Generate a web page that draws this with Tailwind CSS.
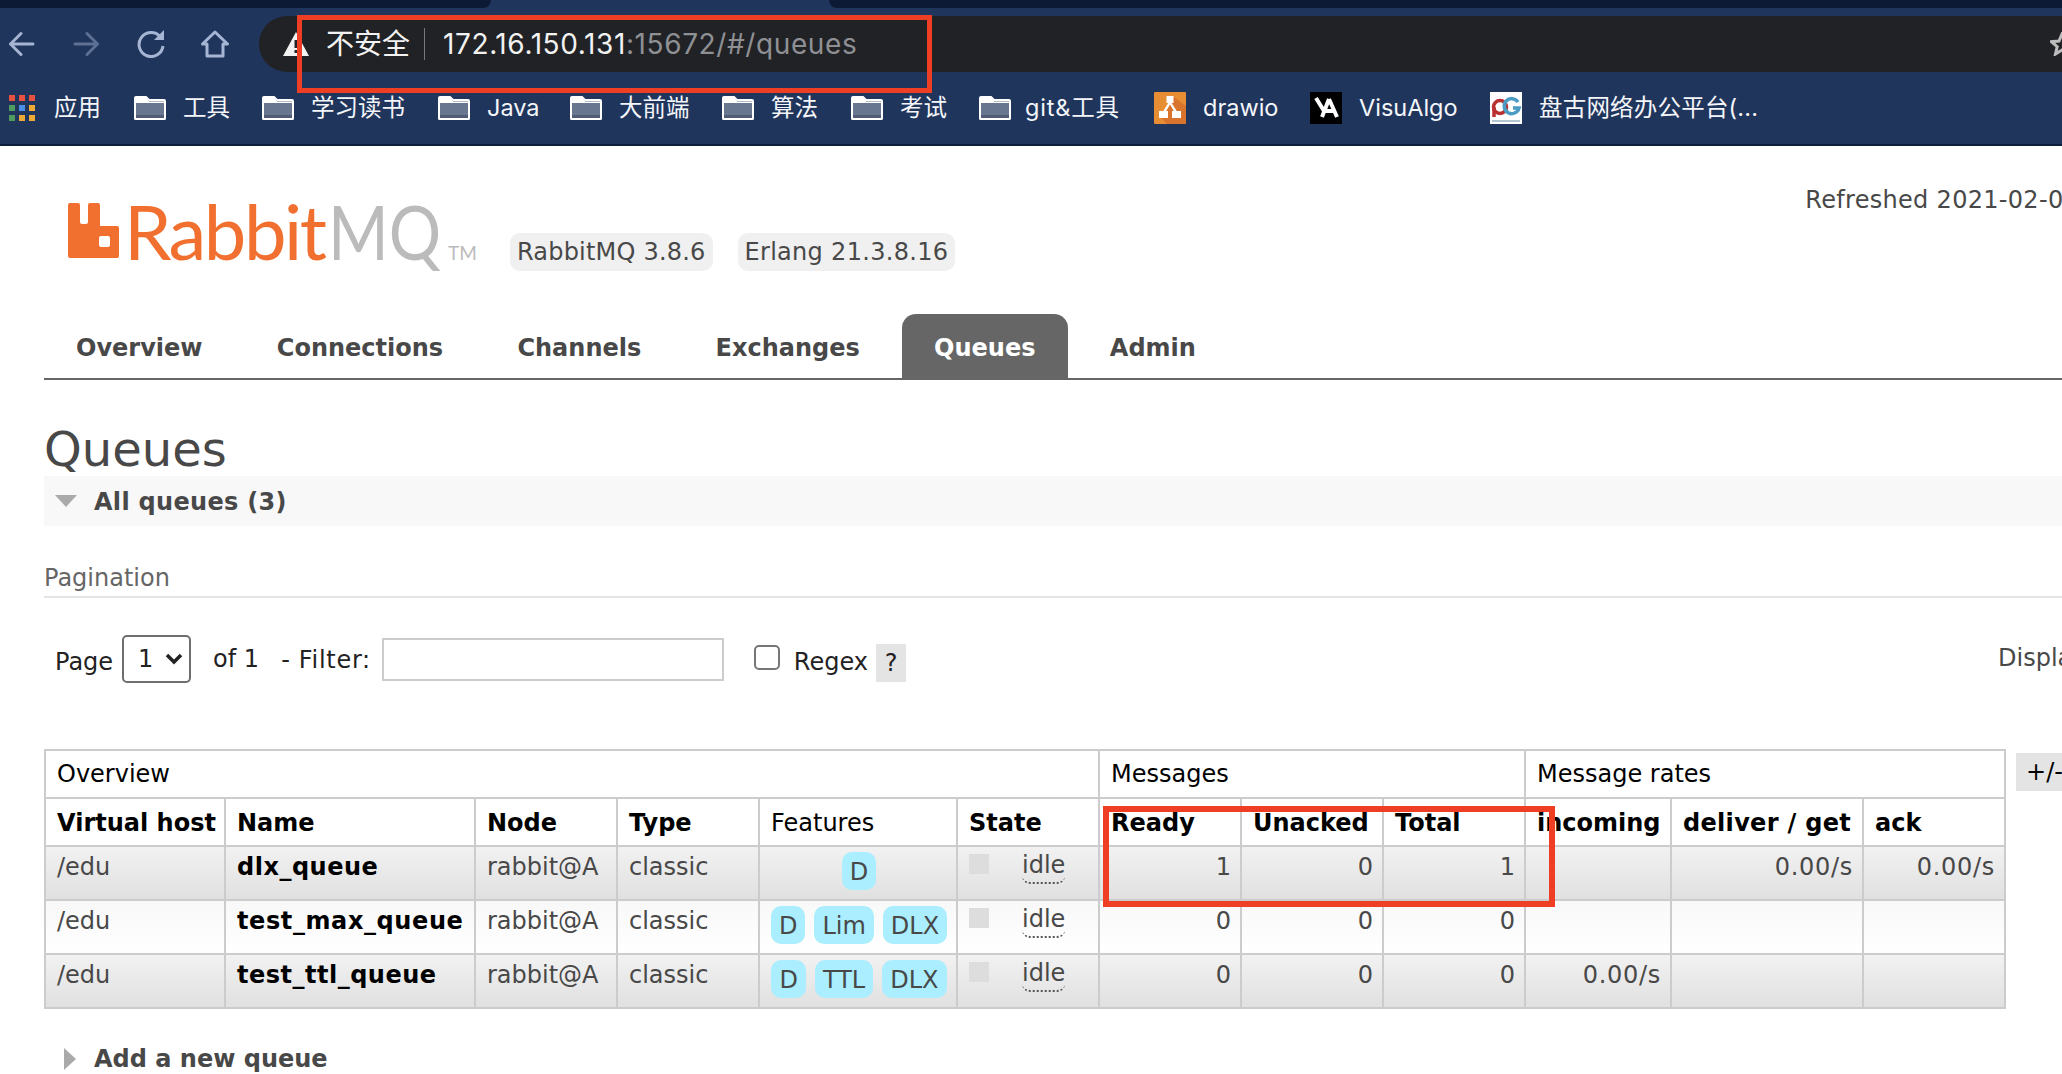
<!DOCTYPE html>
<html lang="en">
<head>
  <meta charset="UTF-8" />
  <title>RabbitMQ Management</title>
  <script src="https://cdn.jsdelivr.net/npm/@tailwindcss/browser@4"></script>
</head>
<body class="bg-white">
<div class="relative w-[2062px] h-[1074px] overflow-hidden font-['DejaVu_Sans',sans-serif] text-[24px] text-[#484848]">

  <!-- browser chrome -->
  <div class="h-[146px] bg-[#20355c] border-b-2 border-[#0f1e3a] font-['Inter','Noto_Sans_CJK_SC',sans-serif] text-white">
    <div class="flex h-[8px]">
      <div class="w-[491px] bg-[#0c1a36] rounded-br-lg"></div>
      <div class="w-[338px]"></div>
      <div class="flex-1 bg-[#0c1a36] rounded-bl-lg"></div>
    </div>
    <div class="flex items-center h-[56px] mt-[8px]">
      <svg class="ml-[9px] w-[26px] h-[26px]" viewBox="0 0 26 26" fill="none" stroke="#a5b5d3" stroke-width="3" stroke-linecap="round" stroke-linejoin="round"><path d="M24 13H2M12 2.5 1.5 13 12 23.5"/></svg>
      <svg class="ml-[38px] w-[26px] h-[26px]" viewBox="0 0 26 26" fill="none" stroke="#5d6f92" stroke-width="3" stroke-linecap="round" stroke-linejoin="round"><path d="M2 13h22M14 2.5 24.500 13 14 23.500"/></svg>
      <svg class="ml-[38px] w-[28px] h-[28px]" viewBox="0 0 28 28" fill="none" stroke="#a5b5d3" stroke-width="3"><path d="M23 6.500A12 12 0 1 0 26 16"/><path d="M17 10h10V0z" fill="#a5b5d3" stroke="none"/></svg>
      <svg class="ml-[36px] w-[28px] h-[28px]" viewBox="0 0 28 28" fill="none" stroke="#a5b5d3" stroke-width="3" stroke-linejoin="round"><path d="M1.500 14 14 2l12.500 12H22v12H6V14z"/></svg>
      <div class="flex items-center flex-1 h-[56px] ml-[30px] bg-[#212226] rounded-l-[28px]">
        <svg class="ml-[24px] w-[26px] h-[24px]" viewBox="0 0 26 24"><path d="M13 0 26 24H0z" fill="#f2f2f2"/><path d="M11.500 8h3v8h-3zM11.500 18h3v3h-3z" fill="#212226"/></svg>
        <span class="ml-[17px] text-[28px] leading-none text-[#f2f2f2]">不安全</span>
        <div class="ml-[14px] w-px h-[32px] bg-[#77797e]"></div>
        <div class="ml-[18px] text-[28px] tracking-[0.6px] leading-none whitespace-nowrap text-[#f2f2f2]">172.16.150.131<span class="text-[#8f9094]">:15672/#/queues</span></div>
        <svg class="ml-auto mr-[-12px] w-[24px] h-[24px]" viewBox="0 0 24 24" fill="none" stroke="#bdbdbd" stroke-width="3"><path d="m12 2 3 7 7.500.7-5.700 5 1.700 7.300L12 18l-6.500 4 1.700-7.300-5.700-5L9 9z"/></svg>
      </div>
    </div>
    <div class="flex items-center h-[72px] text-[23.500px] whitespace-nowrap text-[#f4f6fa]">
      <div class="flex items-center w-[134px] pl-[9px] gap-[19px]">
        <div class="grid grid-cols-3 gap-[4px] w-[26px]">
          <i class="h-[6px] bg-[#e8503f]"></i><i class="h-[6px] bg-[#e8503f]"></i><i class="h-[6px] bg-[#e8503f]"></i>
          <i class="h-[6px] bg-[#4f9a5f]"></i><i class="h-[6px] bg-[#4a8ee8]"></i><i class="h-[6px] bg-[#eeaa35]"></i>
          <i class="h-[6px] bg-[#4f9a5f]"></i><i class="h-[6px] bg-[#eeaa35]"></i><i class="h-[6px] bg-[#eeaa35]"></i>
        </div>
        <span>应用</span>
      </div>
      <div class="flex items-center w-[128px] gap-[17px]"><svg class="w-[32px] h-[24px]" viewBox="0 0 32 24"><path d="M1 22.500V2a1 1 0 0 1 1-1h10l3 3h15a1 1 0 0 1 1 1v17.500a.5.5 0 0 1-.5.5H1.500a.5.5 0 0 1-.5-.5z" fill="#69768f" stroke="#fff" stroke-width="2"/><path d="M2 1.500h10l3 4h16v1.500H2z" fill="#fff"/><path d="M2 19h28v3H2z" fill="#515d76"/></svg><span>工具</span></div>
      <div class="flex items-center w-[176px] gap-[17px]"><svg class="w-[32px] h-[24px]" viewBox="0 0 32 24"><path d="M1 22.500V2a1 1 0 0 1 1-1h10l3 3h15a1 1 0 0 1 1 1v17.500a.5.5 0 0 1-.5.5H1.500a.5.5 0 0 1-.5-.5z" fill="#69768f" stroke="#fff" stroke-width="2"/><path d="M2 1.500h10l3 4h16v1.500H2z" fill="#fff"/><path d="M2 19h28v3H2z" fill="#515d76"/></svg><span>学习读书</span></div>
      <div class="flex items-center w-[132px] gap-[17px]"><svg class="w-[32px] h-[24px]" viewBox="0 0 32 24"><path d="M1 22.500V2a1 1 0 0 1 1-1h10l3 3h15a1 1 0 0 1 1 1v17.500a.5.5 0 0 1-.5.5H1.500a.5.5 0 0 1-.5-.5z" fill="#69768f" stroke="#fff" stroke-width="2"/><path d="M2 1.500h10l3 4h16v1.500H2z" fill="#fff"/><path d="M2 19h28v3H2z" fill="#515d76"/></svg><span>Java</span></div>
      <div class="flex items-center w-[152px] gap-[17px]"><svg class="w-[32px] h-[24px]" viewBox="0 0 32 24"><path d="M1 22.500V2a1 1 0 0 1 1-1h10l3 3h15a1 1 0 0 1 1 1v17.500a.5.5 0 0 1-.5.5H1.500a.5.5 0 0 1-.5-.5z" fill="#69768f" stroke="#fff" stroke-width="2"/><path d="M2 1.500h10l3 4h16v1.500H2z" fill="#fff"/><path d="M2 19h28v3H2z" fill="#515d76"/></svg><span>大前端</span></div>
      <div class="flex items-center w-[129px] gap-[17px]"><svg class="w-[32px] h-[24px]" viewBox="0 0 32 24"><path d="M1 22.500V2a1 1 0 0 1 1-1h10l3 3h15a1 1 0 0 1 1 1v17.500a.5.5 0 0 1-.5.5H1.500a.5.5 0 0 1-.5-.5z" fill="#69768f" stroke="#fff" stroke-width="2"/><path d="M2 1.500h10l3 4h16v1.500H2z" fill="#fff"/><path d="M2 19h28v3H2z" fill="#515d76"/></svg><span>算法</span></div>
      <div class="flex items-center w-[128px] gap-[17px]"><svg class="w-[32px] h-[24px]" viewBox="0 0 32 24"><path d="M1 22.500V2a1 1 0 0 1 1-1h10l3 3h15a1 1 0 0 1 1 1v17.500a.5.5 0 0 1-.5.5H1.500a.5.5 0 0 1-.5-.5z" fill="#69768f" stroke="#fff" stroke-width="2"/><path d="M2 1.500h10l3 4h16v1.500H2z" fill="#fff"/><path d="M2 19h28v3H2z" fill="#515d76"/></svg><span>考试</span></div>
      <div class="flex items-center w-[175px] gap-[14px]"><svg class="w-[32px] h-[24px]" viewBox="0 0 32 24"><path d="M1 22.500V2a1 1 0 0 1 1-1h10l3 3h15a1 1 0 0 1 1 1v17.500a.5.5 0 0 1-.5.5H1.500a.5.5 0 0 1-.5-.5z" fill="#69768f" stroke="#fff" stroke-width="2"/><path d="M2 1.500h10l3 4h16v1.500H2z" fill="#fff"/><path d="M2 19h28v3H2z" fill="#515d76"/></svg><span class="tracking-[0.8px]">git&amp;工具</span></div>
      <div class="flex items-center w-[156px] gap-[17px]">
        <svg class="w-[32px] h-[32px]" viewBox="0 0 32 32"><rect width="32" height="32" rx="1" fill="#e78d34"/><path d="M32 32V14L20 5 7 26l6 6z" fill="#d9742e"/><path d="M12.500 4h7v7h-1.800l5 8H27v7H18v-7h1.800l-3.800-6.500L12.200 19H14v7H5v-7h4.300l5-8h-1.800z" fill="#fff"/></svg>
        <span>drawio</span>
      </div>
      <div class="flex items-center w-[180px] gap-[17px]">
        <svg class="w-[32px] h-[32px]" viewBox="0 0 32 32"><rect width="32" height="32" fill="#000"/><path d="M6 6l8 13M19 7l-7 18M19 7l8 18M15 19h9" fill="none" stroke="#fff" stroke-width="4"/></svg>
        <span>VisuAlgo</span>
      </div>
      <div class="flex items-center gap-[17px]">
        <svg class="w-[32px] h-[32px]" viewBox="0 0 32 32"><rect width="32" height="32" fill="#fff"/><circle cx="10" cy="15" r="6.500" fill="none" stroke="#b8302f" stroke-width="3.500"/><path d="M4 15v10" stroke="#b8302f" stroke-width="3.500"/><path d="M28 10a7.500 7.500 0 1 0 1 6h-6" fill="none" stroke="#4a9cc4" stroke-width="3.500"/><path d="M2 29h28" stroke="#b5c6d3" stroke-width="2"/></svg>
        <span class="tracking-[0.2px]">盘古网络办公平台(...</span>
      </div>
    </div>
  </div>

  <main class="pl-[44px]">
    <!-- header -->
    <div class="flex h-[167px] whitespace-nowrap">
      <div class="flex shrink-0 w-[466px] pl-[24px] pt-[57px]">
        <svg class="shrink-0 w-[52px] h-[55px]" viewBox="0 0 52 55"><path fill-rule="evenodd" d="M2 0h8a2 2 0 0 1 2 2v17a2 2 0 0 0 2 2h4a2 2 0 0 0 2-2V2a2 2 0 0 1 2-2h8a2 2 0 0 1 2 2v21h17a2 2 0 0 1 2 2v28a2 2 0 0 1-2 2H2a2 2 0 0 1-2-2V2a2 2 0 0 1 2-2zM33 33a2 2 0 0 0-2 2v7a2 2 0 0 0 2 2h7a2 2 0 0 0 2-2v-7a2 2 0 0 0-2-2z" fill="#f1702f"/></svg>
        <div class="flex items-baseline h-[55px] ml-[4px] font-['Lato',sans-serif] font-normal text-[76px] leading-[55px]">
          <span class="w-[204px] tracking-[-2.500px] text-[#f1702f]">Rabbit</span>
          <span class="inline-block w-[120px] origin-left scale-x-[0.86] text-[#bbbbbb]">MQ</span>
          <span class="text-[19px] text-[#bbbbbb]">TM</span>
        </div>
      </div>
      <div class="flex shrink-0 items-center h-[38px] mt-[87px] px-[7px] tracking-[0.2px] rounded-[10px] bg-[#f0f0f0]">RabbitMQ 3.8.6</div>
      <div class="flex shrink-0 items-center h-[38px] mt-[87px] ml-[25px] px-[7px] tracking-[0.3px] rounded-[10px] bg-[#f0f0f0]">Erlang 21.3.8.16</div>
      <div class="shrink-0 ml-[850px] mt-[36px] tracking-[0.3px]">Refreshed 2021-02-0</div>
    </div>

    <!-- nav -->
    <nav class="flex gap-[10.300px] h-[67px] border-b-2 border-[#666666] font-bold">
      <a class="flex items-center px-[32px] pt-[5px]">Overview</a>
      <a class="flex items-center px-[32px] pt-[5px]">Connections</a>
      <a class="flex items-center px-[32px] pt-[5px]">Channels</a>
      <a class="flex items-center px-[32px] pt-[5px]">Exchanges</a>
      <a class="flex items-center mt-[1px] px-[32px] pt-[3px] bg-[#666666] text-white rounded-t-[14px]">Queues</a>
      <a class="flex items-center px-[32px] pt-[5px]">Admin</a>
    </nav>

    <h1 class="h-[96px] pt-[41px] text-[48px] leading-[56px]">Queues</h1>

    <div class="flex items-center h-[50px] bg-[#f8f8f8] font-bold">
      <div class="ml-[11px] w-0 h-0 border-x-[11px] border-x-transparent border-t-[12px] border-t-[#aaaaaa]"></div>
      <span class="ml-[17px] pt-[2px] tracking-[0.3px]">All queues (3)</span>
    </div>

    <div class="flex items-end h-[72px] border-b-2 border-[#e4e4e4] text-[#666666]">
      <span>Pagination</span>
    </div>

    <!-- pagination controls -->
    <div class="flex items-center h-[151px] pb-[29px] whitespace-nowrap text-[#222222]">
      <span class="shrink-0 ml-[11px] mt-[6px]">Page</span>
      <div class="flex shrink-0 items-center w-[69px] h-[48px] ml-[9px] pl-[14px] border-2 border-[#6e6e6e] rounded-[5px]">
        <span>1</span>
        <svg class="ml-[12px] w-[18px] h-[12px]" viewBox="0 0 18 12" fill="none" stroke="#222" stroke-width="3.500"><path d="m2 2 7 7 7-7"/></svg>
      </div>
      <span class="shrink-0 ml-[22px]">of 1</span>
      <span class="shrink-0 ml-[22px] mt-[2px] tracking-[0.7px]">- Filter:</span>
      <input type="text" class="shrink-0 w-[342px] h-[43px] ml-[11px] border-2 border-[#cccccc] bg-white" />
      <input type="checkbox" class="shrink-0 appearance-none w-[26px] h-[25px] ml-[30px] mt-[-4px] border-2 border-[#767676] rounded-[5px] bg-white" />
      <span class="shrink-0 ml-[14px] mt-[6px]">Regex</span>
      <span class="flex shrink-0 items-center justify-center w-[30px] h-[38px] ml-[8px] mt-[7px] bg-[#e4e4e4]">?</span>
      <span class="shrink-0 ml-[1092px] mt-[-2px] text-[#484848]">Display</span>
    </div>

    <!-- queue table -->
    <div class="flex items-start">
      <table class="shrink-0 table-fixed border-collapse border-2 border-[#cccccc] w-[1960px]">
        <colgroup>
          <col class="w-[180px]" /><col class="w-[250px]" /><col class="w-[142px]" /><col class="w-[142px]" /><col class="w-[198px]" /><col class="w-[142px]" />
          <col class="w-[142px]" /><col class="w-[142px]" /><col class="w-[142px]" /><col class="w-[146px]" /><col class="w-[192px]" /><col class="w-[142px]" />
        </colgroup>
        <thead class="text-black">
          <tr class="h-[48px]">
            <th colspan="6" class="border-2 border-[#cccccc] pl-[11px] pr-[9px] font-normal text-left">Overview</th>
            <th colspan="3" class="border-2 border-[#cccccc] pl-[11px] pr-[9px] font-normal text-left">Messages</th>
            <th colspan="3" class="border-2 border-[#cccccc] pl-[11px] pr-[9px] font-normal text-left">Message rates</th>
          </tr>
          <tr class="h-[48px]">
            <th class="border-2 border-[#cccccc] pl-[11px] pr-[9px] pt-[2px] font-bold text-left whitespace-nowrap">Virtual host</th>
            <th class="border-2 border-[#cccccc] pl-[11px] pr-[9px] pt-[2px] font-bold text-left">Name</th>
            <th class="border-2 border-[#cccccc] pl-[11px] pr-[9px] pt-[2px] font-bold text-left">Node</th>
            <th class="border-2 border-[#cccccc] pl-[11px] pr-[9px] pt-[2px] font-bold text-left">Type</th>
            <th class="border-2 border-[#cccccc] pl-[11px] pr-[9px] pt-[2px] font-normal text-left">Features</th>
            <th class="border-2 border-[#cccccc] pl-[11px] pr-[9px] pt-[2px] font-bold text-left">State</th>
            <th class="border-2 border-[#cccccc] pl-[11px] pr-[9px] pt-[2px] font-bold text-left">Ready</th>
            <th class="border-2 border-[#cccccc] pl-[11px] pr-[9px] pt-[2px] font-bold text-left">Unacked</th>
            <th class="border-2 border-[#cccccc] pl-[11px] pr-[9px] pt-[2px] font-bold text-left">Total</th>
            <th class="border-2 border-[#cccccc] pl-[11px] pr-[9px] pt-[2px] font-bold text-left">incoming</th>
            <th class="border-2 border-[#cccccc] pl-[11px] pr-[9px] pt-[2px] font-bold text-left tracking-[0.3px] whitespace-nowrap">deliver / get</th>
            <th class="border-2 border-[#cccccc] pl-[11px] pr-[9px] pt-[2px] font-bold text-left">ack</th>
          </tr>
        </thead>
        <tbody>
          <tr class="h-[54px] bg-linear-to-b from-[#f2f2f2] to-[#e0e0e0]">
            <td class="border-2 border-[#cccccc] pl-[11px] pr-[9px] pb-[13px] leading-[30px]">/edu</td>
            <td class="border-2 border-[#cccccc] pl-[11px] pr-[9px] pb-[13px] leading-[30px] font-bold tracking-[0.5px] text-black">dlx_queue</td>
            <td class="border-2 border-[#cccccc] pl-[11px] pr-[9px] pb-[13px] leading-[30px]">rabbit@A</td>
            <td class="border-2 border-[#cccccc] pl-[11px] pr-[9px] pb-[13px] leading-[30px]">classic</td>
            <td class="border-2 border-[#cccccc] pl-[2px] pb-[5px]">
              <div class="flex justify-center gap-[9px]"><span class="flex items-center h-[38px] px-[8px] pt-[2px] rounded-[10px] bg-[#aaeeff]">D</span></div>
            </td>
            <td class="border-2 border-[#cccccc] pl-[11px] pr-[9px] pb-[13px] leading-[30px]">
              <div class="flex items-start"><i class="w-[20px] h-[20px] mt-[5px] bg-[#dddddd]"></i><span class="ml-[33px] h-[35px] pt-[1px] border-b-2 border-dotted border-[#555555] rounded-b-[8px]">idle</span></div>
            </td>
            <td class="border-2 border-[#cccccc] pl-[11px] pr-[9px] pb-[13px] leading-[30px] text-right">1</td>
            <td class="border-2 border-[#cccccc] pl-[11px] pr-[9px] pb-[13px] leading-[30px] text-right">0</td>
            <td class="border-2 border-[#cccccc] pl-[11px] pr-[9px] pb-[13px] leading-[30px] text-right">1</td>
            <td class="border-2 border-[#cccccc] pl-[11px] pr-[9px] pb-[13px] leading-[30px] text-right"></td>
            <td class="border-2 border-[#cccccc] pl-[11px] pr-[9px] pb-[13px] leading-[30px] tracking-[0.7px] text-right">0.00/s</td>
            <td class="border-2 border-[#cccccc] pl-[11px] pr-[9px] pb-[13px] leading-[30px] tracking-[0.7px] text-right">0.00/s</td>
          </tr>
          <tr class="h-[54px] bg-linear-to-b from-[#f8f8f8] to-white">
            <td class="border-2 border-[#cccccc] pl-[11px] pr-[9px] pb-[13px] leading-[30px]">/edu</td>
            <td class="border-2 border-[#cccccc] pl-[11px] pr-[9px] pb-[13px] leading-[30px] font-bold tracking-[0.6px] text-black whitespace-nowrap">test_max_queue</td>
            <td class="border-2 border-[#cccccc] pl-[11px] pr-[9px] pb-[13px] leading-[30px]">rabbit@A</td>
            <td class="border-2 border-[#cccccc] pl-[11px] pr-[9px] pb-[13px] leading-[30px]">classic</td>
            <td class="border-2 border-[#cccccc] pl-[2px] pb-[5px]">
              <div class="flex justify-center gap-[9px]"><span class="flex items-center h-[38px] px-[8px] pt-[2px] rounded-[10px] bg-[#aaeeff]">D</span><span class="flex items-center h-[38px] px-[8px] pt-[2px] rounded-[10px] bg-[#aaeeff]">Lim</span><span class="flex items-center h-[38px] px-[8px] pt-[2px] rounded-[10px] bg-[#aaeeff]">DLX</span></div>
            </td>
            <td class="border-2 border-[#cccccc] pl-[11px] pr-[9px] pb-[13px] leading-[30px]">
              <div class="flex items-start"><i class="w-[20px] h-[20px] mt-[5px] bg-[#dddddd]"></i><span class="ml-[33px] h-[35px] pt-[1px] border-b-2 border-dotted border-[#555555] rounded-b-[8px]">idle</span></div>
            </td>
            <td class="border-2 border-[#cccccc] pl-[11px] pr-[9px] pb-[13px] leading-[30px] text-right">0</td>
            <td class="border-2 border-[#cccccc] pl-[11px] pr-[9px] pb-[13px] leading-[30px] text-right">0</td>
            <td class="border-2 border-[#cccccc] pl-[11px] pr-[9px] pb-[13px] leading-[30px] text-right">0</td>
            <td class="border-2 border-[#cccccc] pl-[11px] pr-[9px] pb-[13px] leading-[30px] text-right"></td>
            <td class="border-2 border-[#cccccc] pl-[11px] pr-[9px] pb-[13px] leading-[30px] text-right"></td>
            <td class="border-2 border-[#cccccc] pl-[11px] pr-[9px] pb-[13px] leading-[30px] text-right"></td>
          </tr>
          <tr class="h-[54px] bg-linear-to-b from-[#f2f2f2] to-[#e0e0e0]">
            <td class="border-2 border-[#cccccc] pl-[11px] pr-[9px] pb-[13px] leading-[30px]">/edu</td>
            <td class="border-2 border-[#cccccc] pl-[11px] pr-[9px] pb-[13px] leading-[30px] font-bold tracking-[0.5px] text-black">test_ttl_queue</td>
            <td class="border-2 border-[#cccccc] pl-[11px] pr-[9px] pb-[13px] leading-[30px]">rabbit@A</td>
            <td class="border-2 border-[#cccccc] pl-[11px] pr-[9px] pb-[13px] leading-[30px]">classic</td>
            <td class="border-2 border-[#cccccc] pl-[2px] pb-[5px]">
              <div class="flex justify-center gap-[9px]"><span class="flex items-center h-[38px] px-[8px] pt-[2px] rounded-[10px] bg-[#aaeeff]">D</span><span class="flex items-center h-[38px] px-[8px] pt-[2px] rounded-[10px] bg-[#aaeeff]">TTL</span><span class="flex items-center h-[38px] px-[8px] pt-[2px] rounded-[10px] bg-[#aaeeff]">DLX</span></div>
            </td>
            <td class="border-2 border-[#cccccc] pl-[11px] pr-[9px] pb-[13px] leading-[30px]">
              <div class="flex items-start"><i class="w-[20px] h-[20px] mt-[5px] bg-[#dddddd]"></i><span class="ml-[33px] h-[35px] pt-[1px] border-b-2 border-dotted border-[#555555] rounded-b-[8px]">idle</span></div>
            </td>
            <td class="border-2 border-[#cccccc] pl-[11px] pr-[9px] pb-[13px] leading-[30px] text-right">0</td>
            <td class="border-2 border-[#cccccc] pl-[11px] pr-[9px] pb-[13px] leading-[30px] text-right">0</td>
            <td class="border-2 border-[#cccccc] pl-[11px] pr-[9px] pb-[13px] leading-[30px] text-right">0</td>
            <td class="border-2 border-[#cccccc] pl-[11px] pr-[9px] pb-[13px] leading-[30px] tracking-[0.7px] text-right">0.00/s</td>
            <td class="border-2 border-[#cccccc] pl-[11px] pr-[9px] pb-[13px] leading-[30px] text-right"></td>
            <td class="border-2 border-[#cccccc] pl-[11px] pr-[9px] pb-[13px] leading-[30px] text-right"></td>
          </tr>
        </tbody>
      </table>
      <div class="flex shrink-0 items-center w-[60px] h-[38px] ml-[10px] mt-[4px] pl-[10px] bg-[#e4e4e4] text-black">+/-</div>
    </div>

    <div class="flex items-center h-[50px] mt-[25px] font-bold">
      <div class="ml-[20px] w-0 h-0 border-y-[11px] border-y-transparent border-l-[12px] border-l-[#aaaaaa]"></div>
      <span class="ml-[18px]">Add a new queue</span>
    </div>
  </main>

  <!-- red annotation boxes drawn over the screenshot -->
  <div class="absolute left-[297px] top-[15px] w-[635px] h-[78px] border-[5px] border-[#ee3f24]"></div>
  <div class="absolute left-[1103px] top-[806px] w-[452px] h-[101px] border-[6px] border-[#ee3f24]"></div>
</div>
</body>
</html>
